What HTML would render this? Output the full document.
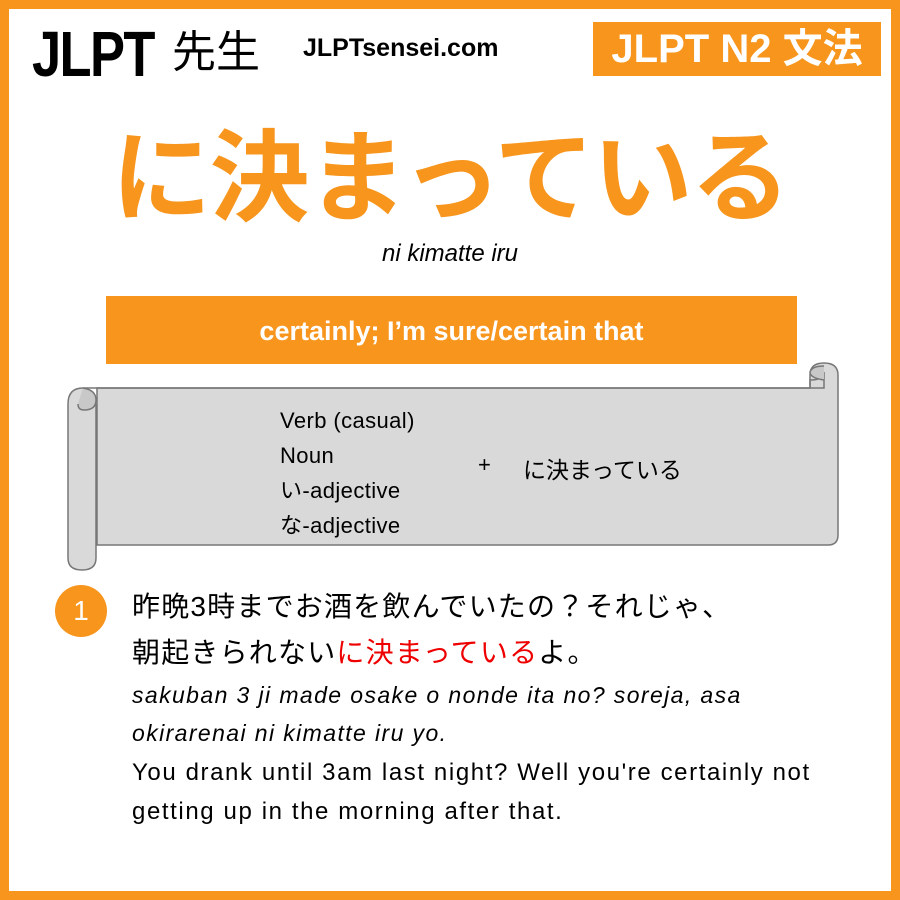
<html><head><style>
body{margin:0;width:900px;height:900px;overflow:hidden;background:#fff;font-family:"Liberation Sans","Noto Sans CJK JP",sans-serif;}
.frame{position:absolute;left:0;top:0;width:882px;height:882px;border:9px solid #F7951D;}
.a{position:absolute;white-space:nowrap;}
</style></head><body>
<div class="frame"></div>
<div class="a" style="left:32px;top:22px;font-size:64px;font-weight:bold;letter-spacing:-2px;transform:scaleX(0.82);transform-origin:left;line-height:64px;">JL<span style="color:#000">P</span>T</div>
<div class="a" style="left:172px;top:18px;font-size:44px;font-family:'Noto Sans CJK JP',sans-serif;line-height:60px;">先生</div>
<div class="a" style="left:303px;top:34px;font-size:25px;font-weight:bold;">JLPTsensei.com</div>
<div class="a" style="left:593px;top:22px;width:288px;height:54px;background:#F7951D;color:#fff;font-size:40px;font-weight:bold;line-height:54px;text-align:center;">JLPT N2 文法</div>
<div class="a" style="left:0;width:900px;top:100px;text-align:center;color:#F7951D;font-size:100px;font-weight:bold;font-family:'Noto Sans CJK JP',sans-serif;line-height:140px;letter-spacing:-2px;">に決まっている</div>
<div class="a" style="left:0;width:900px;top:240px;text-align:center;font-size:24px;font-style:italic;">ni kimatte iru</div>
<div class="a" style="left:106px;top:296px;width:691px;height:68px;background:#F7951D;color:#fff;font-size:27px;font-weight:bold;line-height:70px;text-align:center;">certainly; I’m sure/certain that</div>
<svg class="a" style="left:0;top:0" width="900" height="900">
<g fill="#d9d9d9" stroke="#777" stroke-width="1.5">
<path d="M810 388 L810 375 Q810 363 824 363 Q838 363 838 375 L838 535 Q838 545 828 545 L97 545 L97 388 Z"/>
<path d="M83 388 L824 388 L824 372 Q824 380 810 380 L810 388" fill="none"/>
<path d="M83 388 Q68 388 68 404 L68 558 Q68 570 82 570 Q96 570 96 558 L96 404"/>
<path d="M83 388 Q96 390 96 400 Q96 410 84 410 Q78 410 78 404" fill="#c8c8c8"/>
<path d="M824 380 Q810 378 810 372 Q812 366 824 366" fill="#c8c8c8"/>
</g>
</svg>
<div class="a" style="left:280px;top:403px;font-size:22px;line-height:35px;letter-spacing:0.4px;">Verb (casual)<br>Noun<br>い-adjective<br>な-adjective</div>
<div class="a" style="left:478px;top:452px;font-size:22px;">+</div>
<div class="a" style="left:523px;top:451px;font-size:23px;">に決まっている</div>
<div class="a" style="left:55px;top:585px;width:52px;height:52px;border-radius:50%;background:#F7951D;color:#fff;font-size:28px;text-align:center;line-height:52px;">1</div>
<div class="a" style="left:132px;top:584px;font-size:28px;line-height:46px;letter-spacing:1.2px;">昨晩3時までお酒を飲んでいたの？それじゃ、<br>朝起きられない<span style="color:#e00">に決まっている</span>よ。</div>
<div class="a" style="left:132px;top:676px;font-size:23px;font-style:italic;line-height:38px;letter-spacing:1.4px;">sakuban 3 ji made osake o nonde ita no? soreja, asa<br>okirarenai ni kimatte iru yo.</div>
<div class="a" style="left:132px;top:753px;font-size:24px;line-height:39px;letter-spacing:1.6px;">You drank until 3am last night? Well you're certainly not<br>getting up in the morning after that.</div>
</body></html>
